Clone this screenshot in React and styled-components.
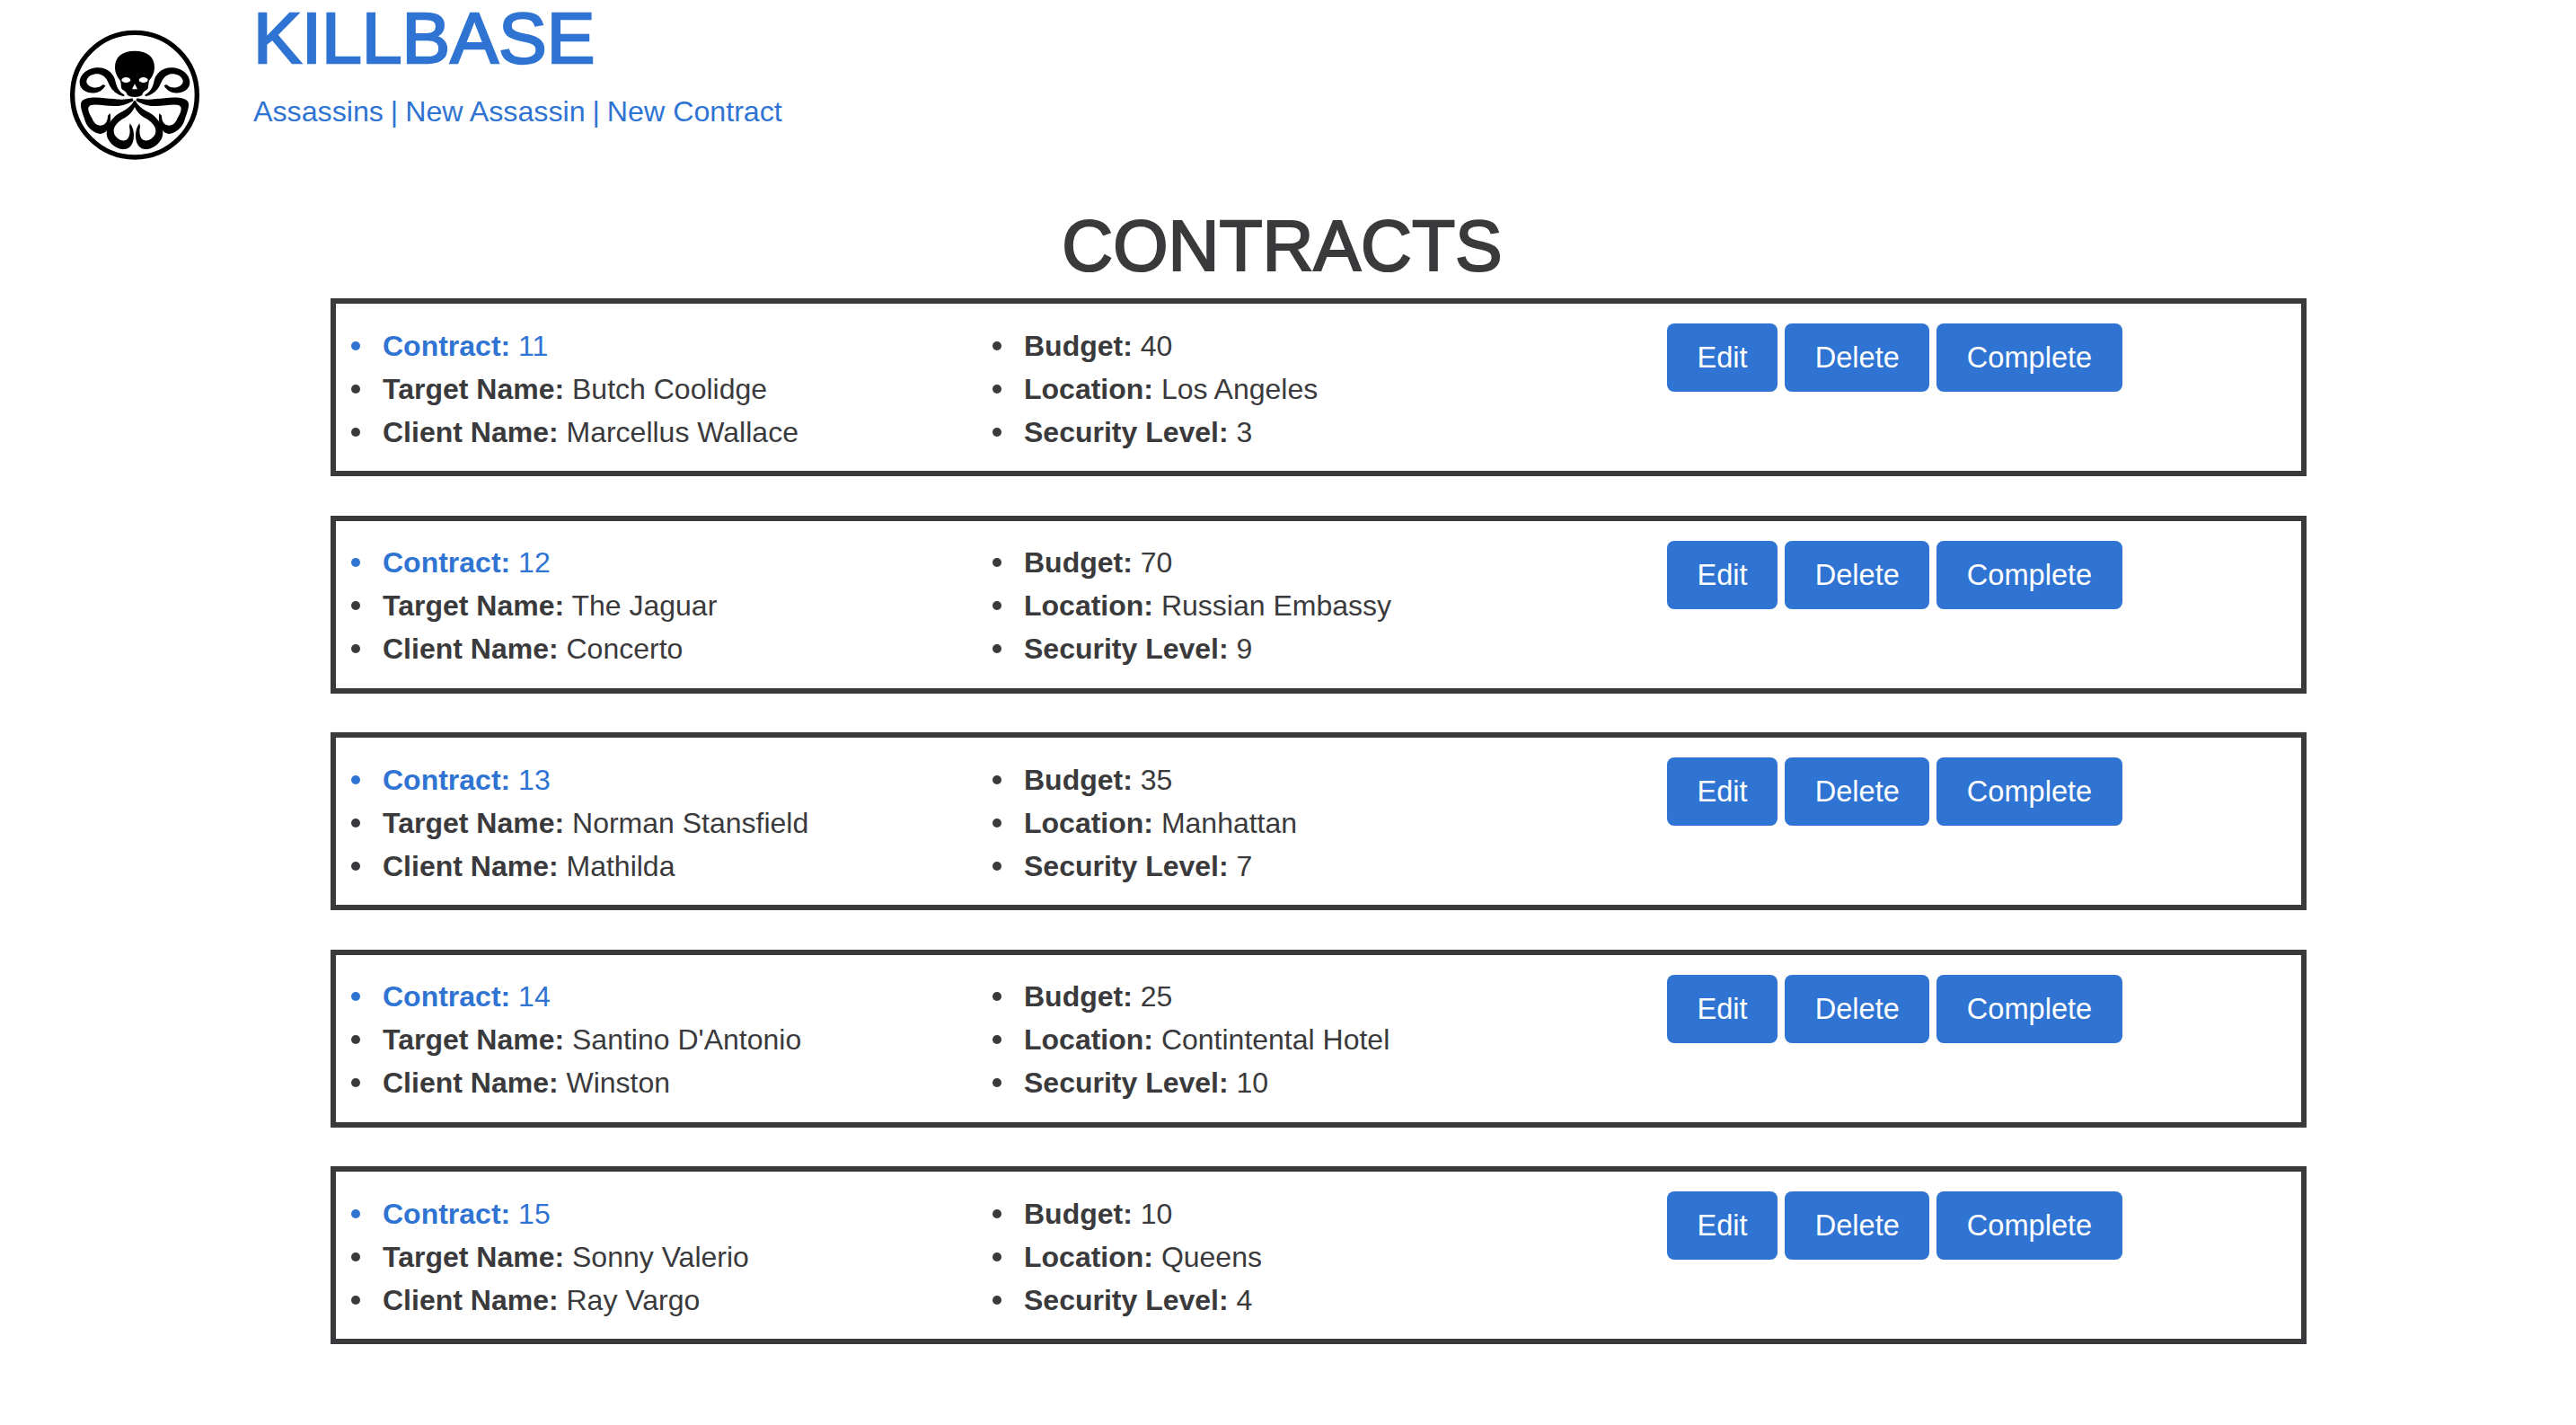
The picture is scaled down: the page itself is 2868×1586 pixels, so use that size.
import React from "react";
import styled, { createGlobalStyle } from "styled-components";

const GlobalStyle = createGlobalStyle`
  html, body {
    margin: 0;
    padding: 0;
    background: #fff;
  }
  body {
    font-family: "Liberation Sans", Arial, sans-serif;
    color: #3a3a3c;
  }
`;

const Page = styled.div`
  width: 2868px;
  height: 1586px;
  overflow: hidden;
`;

const Header = styled.header`
  display: flex;
  align-items: flex-start;
  height: 230px;
  padding-left: 70px;
`;

const LogoWrap = styled.div`
  width: 160px;
  height: 160px;
  margin-top: 26px;
  margin-right: 52px;
`;

const Brand = styled.div`
  display: flex;
  flex-direction: column;
  padding-top: 1.5px;
`;

const SiteTitle = styled.h1`
  margin: 0;
  font-size: 80.5px;
  line-height: 80px;
  font-weight: 400;
  color: #2f74d3;
  -webkit-text-stroke: 2.4px #2f74d3;
`;

const Nav = styled.nav`
  margin-top: 20.5px;
  font-size: 32.2px;
  line-height: 44px;
  color: #2f74d3;
`;

const NavLink = styled.a`
  color: inherit;
  text-decoration: none;
`;

const Separator = styled.span`
  margin: 0 -1px;
`;

const Heading = styled.h2`
  margin: 0 0 14px;
  padding-right: 13px;
  text-align: center;
  font-size: 78.8px;
  line-height: 88px;
  font-weight: 400;
  -webkit-text-stroke: 2.2px #3a3a3c;
`;

const List = styled.div`
  display: flex;
  flex-direction: column;
  gap: 43.6px;
  margin-left: 368px;
  width: 2200px;
`;

const Card = styled.section`
  box-sizing: border-box;
  height: 198px;
  display: flex;
  align-items: flex-start;
  border: 6px solid #3a3a3c;
`;

const Fields = styled.ul`
  box-sizing: border-box;
  width: ${(p) => p.$width}px;
  margin: 0;
  padding: 22.5px 0 0 52px;
  list-style: none;
  font-size: 32px;
  line-height: 48px;
`;

const Field = styled.li`
  position: relative;
  color: ${(p) => (p.$accent ? "#2f74d3" : "inherit")};

  &::before {
    content: "";
    position: absolute;
    left: -35px;
    top: 19px;
    width: 10px;
    height: 10px;
    border-radius: 50%;
    background: currentColor;
  }
`;

const Actions = styled.div`
  display: flex;
  gap: 8px;
  margin-top: 22px;
`;

const Button = styled.button`
  height: 76px;
  padding: 0 33.5px;
  border: 0;
  border-radius: 8px;
  background: #2f74d3;
  color: #fff;
  font-family: inherit;
  font-size: 32.6px;
`;

const Tentacles = () => (
  <g fill="#000">
    {/* upper curl */}
    <path d="M205 238 C190 232 180 215 176 196 C172 170 150 148 118 148 C84 148 56 170 56 198 C56 222 84 236 108 232 C124 230 136 220 142 208 L134 204 C124 214 108 218 96 212 C84 208 76 198 80 188 C86 172 108 166 124 170 C146 176 150 196 160 214 C170 230 186 240 205 244 Z" />
    {/* side lobe */}
    <path d="M232 250 C200 258 170 252 140 250 C110 246 72 246 62 262 C56 274 64 296 72 318 C78 342 94 362 120 368 C138 372 150 358 156 340 C160 326 160 314 158 300 L150 308 C150 320 146 336 132 340 C116 344 104 334 98 318 C84 296 80 280 92 274 C108 268 140 276 170 276 C196 278 218 268 236 258 Z" />
    {/* bottom lobe */}
    <path d="M238 258 C228 276 212 288 192 298 C168 310 146 340 146 366 C146 396 180 424 208 420 C232 416 240 388 236 362 C234 350 230 342 224 334 L222 346 C226 362 224 384 210 390 C194 396 172 380 170 362 C168 344 186 326 206 316 C226 304 242 286 244 262 Z" />
  </g>
);

const HydraLogo = () => (
  <svg viewBox="0 0 480 480" width="160" height="160">
    <defs>
      <filter id="soft">
        <feGaussianBlur stdDeviation="2.2" />
      </filter>
    </defs>
    <g filter="url(#soft)">
      <circle cx="240" cy="239" r="208" fill="none" stroke="#000" strokeWidth="16" />
      <path
        fill="#000"
        d="M240 92 C198 92 174 112 174 146 C174 168 184 180 192 192 C196 204 192 216 200 222 C208 226 212 230 216 240 C226 248 254 248 264 240 C268 230 272 226 280 222 C288 216 284 204 288 192 C296 180 306 168 306 146 C306 112 282 92 240 92 Z"
      />
      <ellipse cx="211" cy="189" rx="15" ry="9" fill="#fff" />
      <ellipse cx="269" cy="189" rx="15" ry="9" fill="#fff" />
      <path d="M240 202 L231 220 H249 Z" fill="#fff" />
      <Tentacles />
      <g transform="matrix(-1 0 0 1 480 0)">
        <Tentacles />
      </g>
    </g>
  </svg>
);

const contracts = [
  { id: 11, target: "Butch Coolidge", client: "Marcellus Wallace", budget: 40, location: "Los Angeles", security: 3 },
  { id: 12, target: "The Jaguar", client: "Concerto", budget: 70, location: "Russian Embassy", security: 9 },
  { id: 13, target: "Norman Stansfield", client: "Mathilda", budget: 35, location: "Manhattan", security: 7 },
  { id: 14, target: "Santino D'Antonio", client: "Winston", budget: 25, location: "Contintental Hotel", security: 10 },
  { id: 15, target: "Sonny Valerio", client: "Ray Vargo", budget: 10, location: "Queens", security: 4 },
];

export default function App() {
  return (
    <Page>
      <GlobalStyle />
      <Header>
        <LogoWrap>
          <HydraLogo />
        </LogoWrap>
        <Brand>
          <SiteTitle>KILLBASE</SiteTitle>
          <Nav>
            <NavLink href="#">Assassins</NavLink> <Separator>|</Separator> <NavLink href="#">New Assassin</NavLink> <Separator>|</Separator> <NavLink href="#">New Contract</NavLink>
          </Nav>
        </Brand>
      </Header>
      <Heading>CONTRACTS</Heading>
      <List>
        {contracts.map((c) => (
          <Card key={c.id}>
            <Fields $width={714}>
              <Field $accent><b>Contract:</b> {c.id}</Field>
              <Field><b>Target Name:</b> {c.target}</Field>
              <Field><b>Client Name:</b> {c.client}</Field>
            </Fields>
            <Fields $width={768}>
              <Field><b>Budget:</b> {c.budget}</Field>
              <Field><b>Location:</b> {c.location}</Field>
              <Field><b>Security Level:</b> {c.security}</Field>
            </Fields>
            <Actions>
              <Button>Edit</Button>
              <Button>Delete</Button>
              <Button>Complete</Button>
            </Actions>
          </Card>
        ))}
      </List>
    </Page>
  );
}
